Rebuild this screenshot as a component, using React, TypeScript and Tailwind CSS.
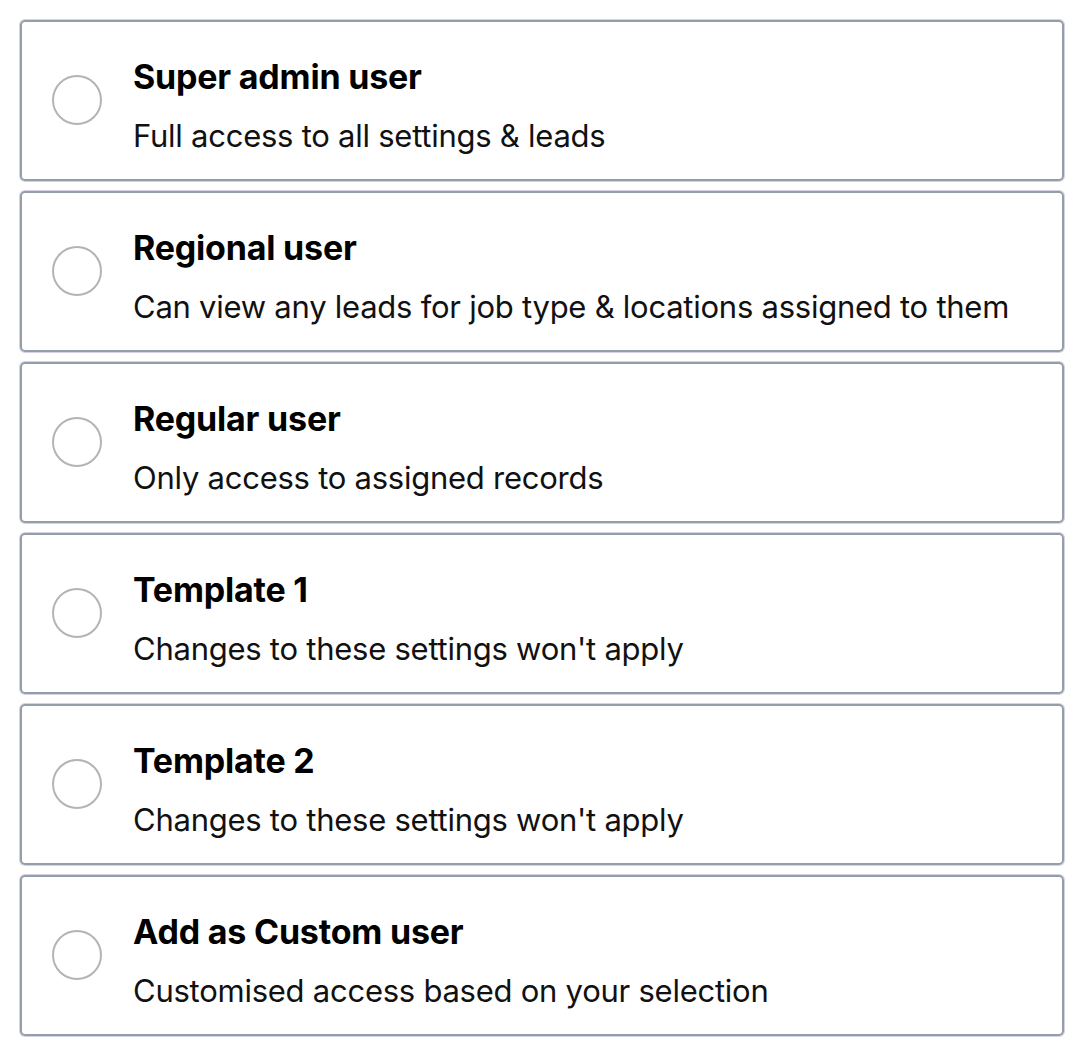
const roles = [
  { title: "Super admin user", desc: "Full access to all settings & leads" },
  { title: "Regional user", desc: "Can view any leads for job type & locations assigned to them" },
  { title: "Regular user", desc: "Only access to assigned records" },
  { title: "Template 1", desc: "Changes to these settings won't apply" },
  { title: "Template 2", desc: "Changes to these settings won't apply" },
  { title: "Add as Custom user", desc: "Customised access based on your selection" },
];

export default function App() {
  return (
    <div className="min-h-screen bg-white px-[20px] pt-[20px] font-['Inter',sans-serif]">
      <div className="flex flex-col gap-[10px]">
        {roles.map((r) => (
          <label
            key={r.title}
            className="flex h-[161px] items-center rounded-[5px] border-2 border-[#939ea9] pl-[30px] ring-1 ring-[#d5d2e3]"
          >
            <span className="-mt-[1px] h-[50px] w-[50px] shrink-0 rounded-full border-2 border-[#b4b4b4]" />
            <div className="ml-[31px] flex flex-col pt-[11px]">
              <span className="text-[34px] font-bold leading-[40px] tracking-[-0.2px] text-black">
                {r.title}
              </span>
              <span className="mt-[19px] text-[31px] leading-[40px] tracking-[-0.25px] text-[#111]">
                {r.desc}
              </span>
            </div>
          </label>
        ))}
      </div>
    </div>
  );
}
